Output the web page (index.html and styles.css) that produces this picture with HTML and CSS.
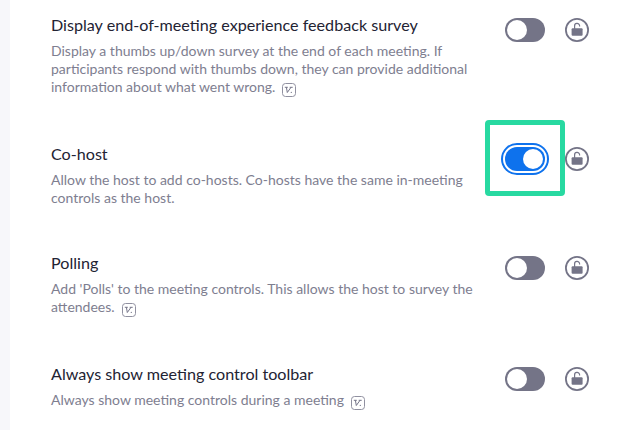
FILE: index.html
```html
<!DOCTYPE html>
<html lang="en">
<head>
<meta charset="utf-8">
<title>Meeting settings</title>
<link rel="stylesheet" href="styles.css">
</head>
<body>
<svg class="defs" width="0" height="0" aria-hidden="true">
  <symbol id="lock" viewBox="0 0 24 24">
    <circle cx="12" cy="12" r="11.1" fill="#fff" stroke="#747487" stroke-width="1.8"/>
    <path d="M9.6 11V8.2a2.5 2.5 0 0 1 5-.5v.9" fill="none" stroke="#747487" stroke-width="1.2"/>
    <rect x="6.6" y="10.2" width="11" height="7.6" rx="1" fill="#747487"/>
  </symbol>
  <symbol id="info" viewBox="0 0 14 14">
    <rect x=".5" y=".5" width="13" height="13" rx="3" fill="none" stroke="#9090a0" stroke-width="1"/>
    <path d="M2.8 4.3h3M4.4 4.3l.9 5.2 3.7-5.2M7.7 4.3h3" fill="none" stroke="#747487" stroke-width="1"/>
    <circle cx="9.3" cy="9.4" r=".6" fill="#747487"/>
  </symbol>
</svg>
<main class="settings">
  <section class="setting first">
    <div class="copy">
      <h2>Display end-of-meeting experience feedback survey</h2>
      <p>Display a thumbs up/down survey at the end of each meeting. If<br>participants respond with thumbs down, they can provide additional<br>information about what went wrong.<svg class="info"><use href="#info"/></svg></p>
    </div>
    <div class="controls"><span class="toggle"></span><svg class="lock"><use href="#lock"/></svg></div>
  </section>
  <section class="setting cohost">
    <div class="copy">
      <h2>Co-host</h2>
      <p>Allow the host to add co-hosts. Co-hosts have the same in-meeting<br>controls as the host.</p>
    </div>
    <div class="controls"><span class="toggle on"></span><svg class="lock"><use href="#lock"/></svg><span class="highlight"></span></div>
  </section>
  <section class="setting polling">
    <div class="copy">
      <h2>Polling</h2>
      <p>Add 'Polls' to the meeting controls. This allows the host to survey the<br>attendees.<svg class="info"><use href="#info"/></svg></p>
    </div>
    <div class="controls"><span class="toggle"></span><svg class="lock"><use href="#lock"/></svg></div>
  </section>
  <section class="setting last">
    <div class="copy">
      <h2>Always show meeting control toolbar</h2>
      <p>Always show meeting controls during a meeting<svg class="info"><use href="#info"/></svg></p>
    </div>
    <div class="controls"><span class="toggle"></span><svg class="lock"><use href="#lock"/></svg></div>
  </section>
</main>
</body>
</html>
```
FILE: styles.css
```css
* { box-sizing: border-box; }
body {
  margin: 0;
  height: 430px;
  overflow: hidden;
  background: #fff;
  font-family: Lato, "Liberation Sans", sans-serif;
}
.defs { display: none; }
.settings {
  height: 430px;
  border-left: 10px solid #f7f7fa;
  padding: 14px 0 0 41px;
}
.setting { display: flex; height: 111px; }
.first { height: 129px; }
.cohost { height: 109px; }
.last { height: 60px; }
.copy { width: 454px; flex: none; white-space: nowrap; }
h2 {
  margin: 0 0 6px;
  font-size: 16.14px;
  line-height: 22px;
  font-weight: 400;
  color: #232333;
}
p {
  height: 18px;
  margin: 0;
  font-size: 14px;
  line-height: 18px;
  color: #7e7e90;
}
.info {
  position: relative;
  top: 1px;
  width: 14px;
  height: 14px;
  margin-left: 7px;
  vertical-align: -4px;
}
.controls {
  position: relative;
  display: flex;
  gap: 20px;
  height: 24px;
  margin-top: 4px;
}
.toggle {
  display: flex;
  width: 40px;
  height: 24px;
  padding: 2px;
  border-radius: 12px;
  background: #747487;
}
.toggle::before {
  content: "";
  width: 20px;
  height: 20px;
  border-radius: 50%;
  background: #fff;
}
.toggle.on {
  justify-content: flex-end;
  background: #0e72ed;
  box-shadow: 0 0 0 2px #fff, 0 0 0 4px #0e72ed;
}
.lock { width: 24px; height: 24px; }
.highlight {
  position: absolute;
  left: -20px;
  top: -27px;
  width: 80px;
  height: 76px;
  border: 5px solid #28d9a1;
  border-radius: 4px;
}
```
